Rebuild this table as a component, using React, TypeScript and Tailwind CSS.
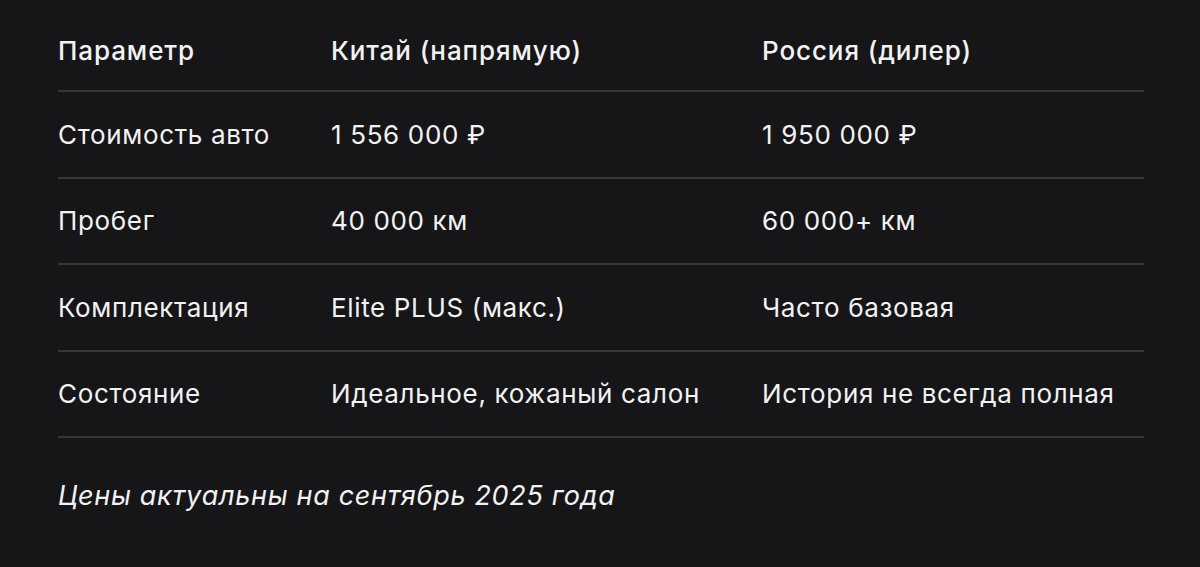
const rows = [
  ['Стоимость авто', '1 556 000 ₽', '1 950 000 ₽'],
  ['Пробег', '40 000 км', '60 000+ км'],
  ['Комплектация', 'Elite PLUS (макс.)', 'Часто базовая'],
  ['Состояние', 'Идеальное, кожаный салон', 'История не всегда полная'],
]

const App = () => {
  return (
    <div className="w-[1200px] h-[567px] bg-[#161618] text-[#f2f2f2] font-['Inter','Noto_Sans',sans-serif] pl-[58px] pr-[56px] pt-[4px] overflow-hidden">
      <div className="grid grid-cols-[273px_431px_1fr] h-[88px] pt-[6px] items-center border-b-2 border-[#38383a] text-[26px] tracking-[0.035em] font-medium">
        <div>Параметр</div>
        <div>Китай (напрямую)</div>
        <div>Россия (дилер)</div>
      </div>
      {rows.map((r) => (
        <div
          key={r[0]}
          className="grid grid-cols-[273px_431px_1fr] h-[86.5px] items-center border-b-2 border-[#38383a] text-[26px] tracking-[0.025em]"
        >
          {r.map((c) => (
            <div key={c}>{c}</div>
          ))}
        </div>
      ))}
      <div className="pt-[38px] text-[27px] tracking-[0.025em] italic">Цены актуальны на сентябрь 2025 года</div>
    </div>
  )
}

export default App
